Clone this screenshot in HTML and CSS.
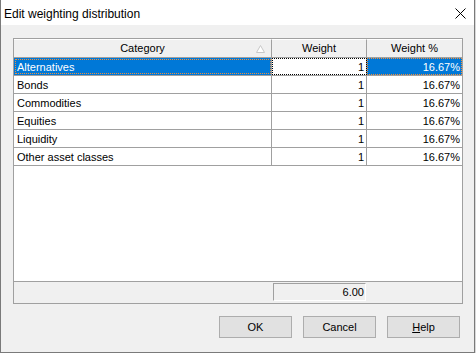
FILE: index.html
```html
<!DOCTYPE html>
<html lang="en">
<head>
    <meta charset="UTF-8">
    <title>Edit weighting distribution</title>
    <link rel="stylesheet" href="styles.css">
</head>
<body>
    <div class="window">
        <div class="titlebar">
            <span class="title">Edit weighting distribution</span>
            <svg class="close" width="11" height="11" viewBox="0 0 11 11">
                <path d="M0.5 0.5 L10.5 10.5 M10.5 0.5 L0.5 10.5" stroke="#000" stroke-width="1" fill="none"/>
            </svg>
        </div>

        <div class="client">
            <div class="grid">
                <div class="row head">
                    <div class="cell cat">
                        <span class="head-text">Category</span>
                        <svg class="sort" width="9" height="8" viewBox="0 0 9 8">
                            <path d="M4.5 0.5 L8.5 7.5 L0.5 7.5 Z" stroke="#c8c8c8" fill="#fff" stroke-width="1"/>
                        </svg>
                    </div>
                    <div class="cell wt center">Weight</div>
                    <div class="cell pct center">Weight %</div>
                </div>
                <div class="row selected">
                    <div class="cell cat focus-blue">Alternatives</div>
                    <div class="cell wt num focus-edit">1</div>
                    <div class="cell pct num focus-blue">16.67%</div>
                </div>
                <div class="row">
                    <div class="cell cat">Bonds</div>
                    <div class="cell wt num">1</div>
                    <div class="cell pct num">16.67%</div>
                </div>
                <div class="row">
                    <div class="cell cat">Commodities</div>
                    <div class="cell wt num">1</div>
                    <div class="cell pct num">16.67%</div>
                </div>
                <div class="row">
                    <div class="cell cat">Equities</div>
                    <div class="cell wt num">1</div>
                    <div class="cell pct num">16.67%</div>
                </div>
                <div class="row">
                    <div class="cell cat">Liquidity</div>
                    <div class="cell wt num">1</div>
                    <div class="cell pct num">16.67%</div>
                </div>
                <div class="row">
                    <div class="cell cat">Other asset classes</div>
                    <div class="cell wt num">1</div>
                    <div class="cell pct num">16.67%</div>
                </div>
                <div class="grid-fill"></div>
                <div class="footer">
                    <div class="foot-spacer"></div>
                    <div class="foot-cell">
                        <div class="total">6.00</div>
                    </div>
                </div>
            </div>

            <div class="buttons">
                <button class="btn">OK</button>
                <button class="btn">Cancel</button>
                <button class="btn"><u>H</u>elp</button>
            </div>
        </div>
    </div>
</body>
</html>
```

FILE: styles.css
```css
body {
    margin: 0;
    padding: 0;
    background-color: #d9d9d9;
    font-family: "Liberation Sans", Arial, sans-serif;
}

.window {
    width: 475px;
    height: 353px;
    box-sizing: border-box;
    background-color: #f0f0f0;
    border: 1px solid #7a7a7a;
    border-top: none;
    display: flex;
    flex-direction: column;
}

.titlebar {
    height: 25px;
    background-color: #fff;
    display: flex;
    align-items: center;
    justify-content: space-between;
    padding: 0 8px 0 3px;
}

.title {
    font-size: 12px;
    color: #000;
    padding-top: 2px;
}

.close {
    display: block;
    margin-top: 1px;
}

.client {
    flex: 1;
    padding: 13px 13px 0 12px;
    display: flex;
    flex-direction: column;
}

.grid {
    width: 450px;
    height: 266px;
    box-sizing: border-box;
    border: 1px solid #a0a0a0;
    background-color: #fff;
    display: flex;
    flex-direction: column;
    font-size: 11px;
}

.row {
    display: flex;
    height: 18px;
    box-sizing: border-box;
    border-bottom: 1px solid #a0a0a0;
}

.cell {
    box-sizing: border-box;
    height: 17px;
    line-height: 18px;
    padding: 0 3px;
    white-space: nowrap;
    color: #000;
}

.cat {
    width: 258px;
    border-right: 1px solid #a0a0a0;
}

.wt {
    width: 95px;
    border-right: 1px solid #a0a0a0;
}

.pct {
    width: 95px;
}

.num {
    text-align: right;
    padding-right: 2px;
}

.head {
    height: 19px;
    background-color: #f0f0f0;
}

.head .cell {
    height: 18px;
    border-top: 1px solid #fff;
    line-height: 17px;
}

.head .cat {
    display: flex;
    align-items: center;
    padding-right: 6px;
}

.head-text {
    flex: 1;
    text-align: center;
    padding-left: 12px;
}

.sort {
    display: block;
    margin-top: 1px;
}

.center {
    text-align: center;
}

.focus-blue {
    background-color: #0078d7;
    color: #fff;
    outline: 1px dotted #f0903c;
    outline-offset: -1px;
}

.cat.focus-blue {
    outline-offset: -2px;
}

.focus-edit {
    background-color: #fff;
    outline: 1px dotted #000;
    outline-offset: -1px;
}

.grid-fill {
    flex: 1;
}

.footer {
    display: flex;
    height: 22px;
    box-sizing: border-box;
    border-top: 1px solid #a0a0a0;
    background-color: #f0f0f0;
    font-size: 11px;
}

.foot-spacer {
    width: 258px;
}

.foot-cell {
    padding: 1px 0 0 1px;
}

.total {
    width: 93px;
    height: 18px;
    box-sizing: border-box;
    border-top: 1px solid #a0a0a0;
    border-left: 1px solid #a0a0a0;
    border-right: 1px solid #fff;
    border-bottom: 1px solid #fff;
    text-align: right;
    line-height: 16px;
    padding-right: 1px;
}

.buttons {
    display: flex;
    justify-content: flex-end;
    gap: 11px;
    margin-top: 12px;
    padding-right: 1px;
}

.btn {
    width: 73px;
    height: 22px;
    box-sizing: border-box;
    border: 1px solid #adadad;
    background-color: #e1e1e1;
    font-family: "Liberation Sans", Arial, sans-serif;
    font-size: 11px;
    color: #000;
    padding: 0;
    border-radius: 0;
}
```
